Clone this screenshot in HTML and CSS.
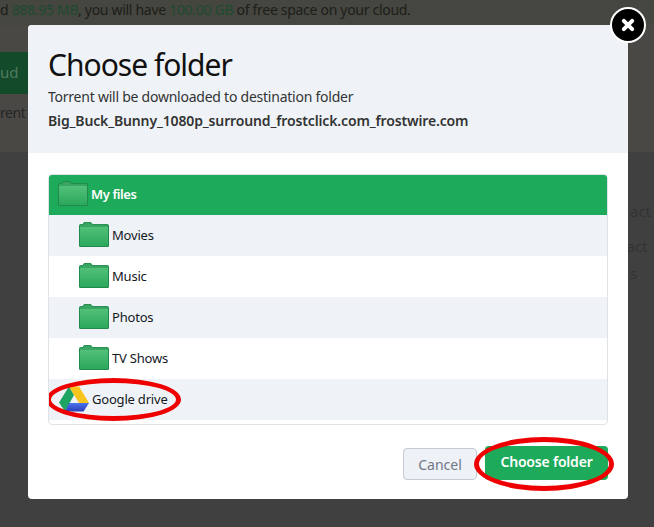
FILE: index.html
```html
<!DOCTYPE html>
<html lang="en">
<head>
    <meta charset="UTF-8">
    <meta name="viewport" content="width=device-width, initial-scale=1.0">
    <title>Choose folder</title>
    <link rel="stylesheet" href="styles.css">
</head>
<body>
    <svg width="0" height="0" class="defs">
        <defs>
            <linearGradient id="folderFill" x1="0" y1="0" x2="0" y2="1">
                <stop offset="0" stop-color="#52c078"/>
                <stop offset="1" stop-color="#2ba85c"/>
            </linearGradient>
            <linearGradient id="driveBlue" x1="0" y1="0" x2="0" y2="1">
                <stop offset="0" stop-color="#4a74ee"/>
                <stop offset="1" stop-color="#2b3fb8"/>
            </linearGradient>
            <symbol id="folder" viewBox="0 0 30 25">
                <path d="M0.5 3.5Q0.5 2.6 1.4 2.6H4L5 0.6H12L13.5 2.6H28.6Q29.5 2.6 29.5 3.5V24Q29.5 24.5 29 24.5H1Q0.5 24.5 0.5 24Z" fill="#3aa663" stroke="#1f8a4c" stroke-width="1"/>
                <path d="M1 5H29V24H1Z" fill="url(#folderFill)"/>
            </symbol>
        </defs>
    </svg>

    <div class="backdrop-page">
        <p class="page-notice">d <span class="green">888.95 MB</span>, you will have <span class="green">100.00 GB</span> of free space on your cloud.</p>
        <div class="page-action">
            <div class="page-btn">ud</div>
            <div class="page-label">rent</div>
        </div>
        <div class="page-side">
            <span>act</span>
            <span class="side-long">tact</span>
            <span>s</span>
        </div>
    </div>

    <div class="modal">
        <button class="modal-close" aria-label="Close">
            <svg width="18" height="18" viewBox="0 0 18 18"><path d="M4.8 4.8L13.2 13.2M13.2 4.8L4.8 13.2" stroke="#fff" stroke-width="4" stroke-linecap="round"/></svg>
        </button>
        <div class="modal-header">
            <h1>Choose folder</h1>
            <p>Torrent will be downloaded to destination folder</p>
            <p class="file-name">Big_Buck_Bunny_1080p_surround_frostclick.com_frostwire.com</p>
        </div>
        <div class="modal-body">
            <ul class="folder-list">
                <li class="folder-row root"><svg class="folder-icon"><use href="#folder"/></svg>My files</li>
                <li class="folder-row child"><svg class="folder-icon"><use href="#folder"/></svg>Movies</li>
                <li class="folder-row child"><svg class="folder-icon"><use href="#folder"/></svg>Music</li>
                <li class="folder-row child"><svg class="folder-icon"><use href="#folder"/></svg>Photos</li>
                <li class="folder-row child"><svg class="folder-icon"><use href="#folder"/></svg>TV Shows</li>
                <li class="folder-row drive">
                    <svg class="drive-icon" width="30" height="26" viewBox="0 0 30 26">
                        <path d="M10 0.5L15 9L6 25.5L0 16.5Z" fill="#1fa463"/>
                        <path d="M10 0.5H20L30 17H20Z" fill="#f8c51c"/>
                        <path d="M10 17H30L24.5 25.5H6Z" fill="url(#driveBlue)"/>
                    </svg>
                    Google drive
                    <span class="mark mark-drive"></span>
                </li>
            </ul>
            <div class="modal-actions">
                <button class="btn btn-cancel">Cancel</button>
                <button class="btn btn-choose">Choose folder<span class="mark mark-choose"></span></button>
            </div>
        </div>
    </div>
</body>
</html>
```

FILE: styles.css
```css
* {
    box-sizing: border-box;
}

html, body {
    margin: 0;
    height: 100%;
}

body {
    position: relative;
    width: 654px;
    height: 527px;
    overflow: hidden;
    background-color: #404040;
    font-family: "Noto Sans", Arial, sans-serif;
    font-size: 13px;
    color: #1c1c1c;
}

.defs {
    position: absolute;
}

/* page behind the modal, dimmed */
.page-notice {
    margin: 0;
    height: 25px;
    padding-top: 1px;
    line-height: 18px;
    font-size: 14px;
    letter-spacing: -0.3px;
    white-space: nowrap;
    background-color: #45463f;
    color: #1d1d1b;
}

.green {
    color: #1d4a2f;
}

.page-action {
    height: 127px;
    padding-top: 27px;
    background-color: #494845;
}

.page-btn {
    width: 28px;
    height: 42px;
    padding-right: 14px;
    line-height: 40px;
    background-color: #134a2a;
    color: #4f7a60;
    font-size: 15px;
    text-align: right;
}

.page-label {
    margin-top: 9px;
    font-size: 14px;
    letter-spacing: -0.4px;
    color: #262626;
}

.page-side {
    display: flex;
    flex-direction: column;
    gap: 14px;
    margin: 49px 0 0 630px;
    font-size: 15px;
    line-height: 20px;
    color: #333;
}

.side-long {
    margin: 1px 0 -7px -9px;
}

/* modal */
.modal {
    position: absolute;
    top: 25px;
    left: 28px;
    width: 600px;
    height: 474px;
    background-color: #fff;
    border-radius: 4px;
}

.modal-close {
    position: absolute;
    top: -18px;
    right: -18px;
    width: 36px;
    height: 36px;
    padding: 0;
    display: flex;
    align-items: center;
    justify-content: center;
    background-color: #000;
    border: 2px solid #fff;
    border-radius: 50%;
}

.modal-header {
    height: 128px;
    padding: 22px 20px 0;
    background-color: #eff3f7;
    border-radius: 4px 4px 0 0;
}

.modal-header h1 {
    margin: 0 0 2px;
    font-size: 30px;
    line-height: 36px;
    font-weight: 400;
    letter-spacing: -1px;
    color: #111;
}

.modal-header p {
    margin: 0;
    font-size: 14px;
    line-height: 24px;
    letter-spacing: -0.24px;
    color: #333;
}

.modal-header .file-name {
    font-weight: 600;
    letter-spacing: -0.14px;
}

.modal-body {
    padding: 21px 20px 20px;
}

.folder-list {
    list-style: none;
    margin: 0;
    padding: 0 0 4px;
    border: 1px solid #dfe3e8;
    border-radius: 4px;
    overflow: hidden;
}

.folder-row {
    display: flex;
    align-items: center;
    height: 41px;
    padding-bottom: 2px;
    font-size: 13px;
    letter-spacing: -0.2px;
    color: #14181f;
}

.folder-row:nth-child(even) {
    background-color: #eff3f7;
}

.root {
    padding-left: 10px;
    margin: -1px -1px 0;
    background-color: #1daa5a;
    color: #fff;
    font-weight: 600;
    letter-spacing: -0.4px;
}

.child {
    padding-left: 30px;
}

.drive {
    position: relative;
    padding-left: 10px;
}

.folder-icon {
    width: 30px;
    height: 25px;
    margin-right: 3px;
    flex: none;
}

.drive-icon {
    margin-right: 3px;
    flex: none;
}

.modal-actions {
    display: flex;
    justify-content: flex-end;
    align-items: flex-end;
    gap: 8px;
    margin-top: 21px;
}

.btn {
    padding: 0;
    font-family: inherit;
    font-size: 14px;
    border-radius: 4px;
}

.btn-cancel {
    width: 74px;
    height: 32px;
    background-color: #eef1f5;
    border: 1px solid #c5cbd3;
    color: #6f7888;
}

.btn-choose {
    position: relative;
    width: 123px;
    height: 34px;
    padding-bottom: 3px;
    background-color: #1daa5a;
    border: none;
    color: #fff;
    font-weight: 600;
    letter-spacing: -0.2px;
}

/* red hand-drawn ellipses */
.mark {
    position: absolute;
    border: 5px solid #ee0000;
    border-radius: 50%;
    pointer-events: none;
}

.mark-drive {
    top: -1px;
    left: -3px;
    width: 135px;
    height: 43px;
}

.mark-choose {
    top: -9px;
    left: -11px;
    width: 140px;
    height: 54px;
}
```
